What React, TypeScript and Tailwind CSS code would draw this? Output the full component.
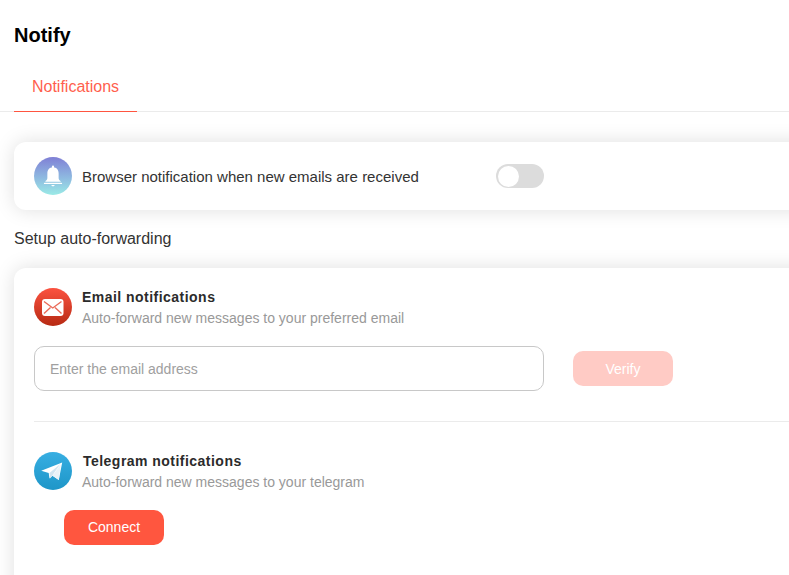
export default function App() {
  return (
    <div className="h-[575px] w-full overflow-hidden bg-white font-['Liberation_Sans',Arial,sans-serif]">
      <div className="w-[1000px]">
        <h1 className="pl-[14px] pt-[24px] text-[20px] leading-[23px] font-bold text-black">Notify</h1>
        <div className="mt-[17px] border-b border-[#ebebeb] pl-[14px]">
          <div className="-mb-px w-[123px] border-b border-[#ff5540] pt-[14px] pb-[15px] text-center text-[16px] leading-[18px] text-[#ff5f4e]">
            Notifications
          </div>
        </div>

        <div className="ml-[14px] mt-[30px] flex h-[68px] items-center rounded-[12px] bg-white pl-[20px] shadow-[0_0_20px_rgba(0,0,0,0.13)]">
          <div className="flex h-[38px] w-[38px] shrink-0 items-center justify-center rounded-full bg-gradient-to-b from-[#7f7fd5] to-[#9aeae6]">
            <svg viewBox="0 0 24 24" className="h-[26px] w-[26px]" fill="#ffffff">
              <rect x="11" y="2.400" width="2" height="3" rx="1" />
              <path d="M12 4c-3.400 0-5.200 2.600-5.200 5.600v4.200c0 1.400-.7 2.200-1.800 2.800v.6h14v-.6c-1.100-.6-1.800-1.400-1.800-2.800V9.600C17.200 6.600 15.400 4 12 4z" />
              <rect x="3.600" y="18.300" width="16.800" height="1.100" rx=".5" />
              <path d="M10.500 20.300h3c0 .8-.7 1.200-1.500 1.200s-1.500-.4-1.500-1.200z" />
            </svg>
          </div>
          <span className="ml-[10px] w-[414px] shrink-0 pt-[2px] text-[15px] leading-[18px] text-[#333333]">Browser notification when new emails are received</span>
          <div className="flex h-[24px] w-[48px] items-center rounded-full bg-[#dcdcdc] pl-[1.500px]">
            <div className="h-[21px] w-[21px] rounded-full bg-white" />
          </div>
        </div>

        <p className="ml-[14px] mt-[19px] text-[16px] leading-[19px] text-[#333333]">Setup auto-forwarding</p>

        <div className="ml-[14px] mt-[20px] h-[340px] rounded-[12px] bg-white pl-[20px] pt-[20px] shadow-[0_0_20px_rgba(0,0,0,0.13)]">
          <div className="flex items-start">
            <svg viewBox="0 0 38 38" className="h-[38px] w-[38px] shrink-0">
              <defs>
                <linearGradient id="mail" x1="0" y1="0" x2="0" y2="1">
                  <stop offset="0" stopColor="#fb5240" />
                  <stop offset="1" stopColor="#b72a13" />
                </linearGradient>
              </defs>
              <circle cx="19" cy="19" r="19" fill="url(#mail)" />
              <rect x="8" y="11" width="21.500" height="17" rx="3" fill="#ffffff" />
              <path d="M10 13.500l8.750 6.500 8.750-6.500M10 25.500l6.500-6M27.500 25.500l-6.500-6" stroke="#ea6a58" strokeWidth="1.400" fill="none" />
            </svg>
            <div className="ml-[10px]">
              <div className="text-[14px] leading-[18px] font-bold tracking-[0.47px] text-[#2b2b2b]">Email notifications</div>
              <div className="mt-[4px] text-[14px] leading-[16px] text-[#999999]">Auto-forward new messages to your preferred email</div>
            </div>
          </div>

          <div className="mt-[20px] flex items-center">
            <div className="flex h-[45px] w-[510px] items-center rounded-[10px] border border-[#c8c8c8] pl-[15px] pt-[1px] text-[14px] text-[#a0a0a0]">
              Enter the email address
            </div>
            <button className="ml-[29px] h-[35px] w-[100px] rounded-[10px] bg-[#ffcbc5] pt-[1px] text-[14px] text-white">Verify</button>
          </div>

          <div className="mt-[30px] h-px bg-[#ebebeb]" />

          <div className="mt-[30px] flex items-start">
            <svg viewBox="0 0 38 38" className="h-[38px] w-[38px] shrink-0">
              <defs>
                <linearGradient id="tg" x1="0" y1="0" x2="0" y2="1">
                  <stop offset="0" stopColor="#37aee2" />
                  <stop offset="1" stopColor="#1e96c8" />
                </linearGradient>
              </defs>
              <circle cx="19" cy="19" r="19" fill="url(#tg)" />
              <path d="M7.200 18.700l21-8.200-3.400 17.600-6.300-4.400-3 2.700-.8-5.500z" fill="#ffffff" />
              <path d="M15.500 20.900l.8 5.500 2.200-3.100 8-11.500z" fill="#d2e5f1" />
              <path d="M18.500 23.700l6.300 4.400 1.900-15.600z" fill="#e9f2f8" />
            </svg>
            <div className="ml-[10px]">
              <div className="pl-px text-[14px] leading-[18px] font-bold tracking-[0.47px] text-[#2b2b2b]">Telegram notifications</div>
              <div className="mt-[4px] text-[14px] leading-[16px] text-[#999999]">Auto-forward new messages to your telegram</div>
            </div>
          </div>

          <button className="ml-[30px] mt-[20px] h-[35px] w-[100px] rounded-[10px] bg-[#ff563f] text-[14px] text-white">Connect</button>
        </div>
      </div>
    </div>
  );
}
